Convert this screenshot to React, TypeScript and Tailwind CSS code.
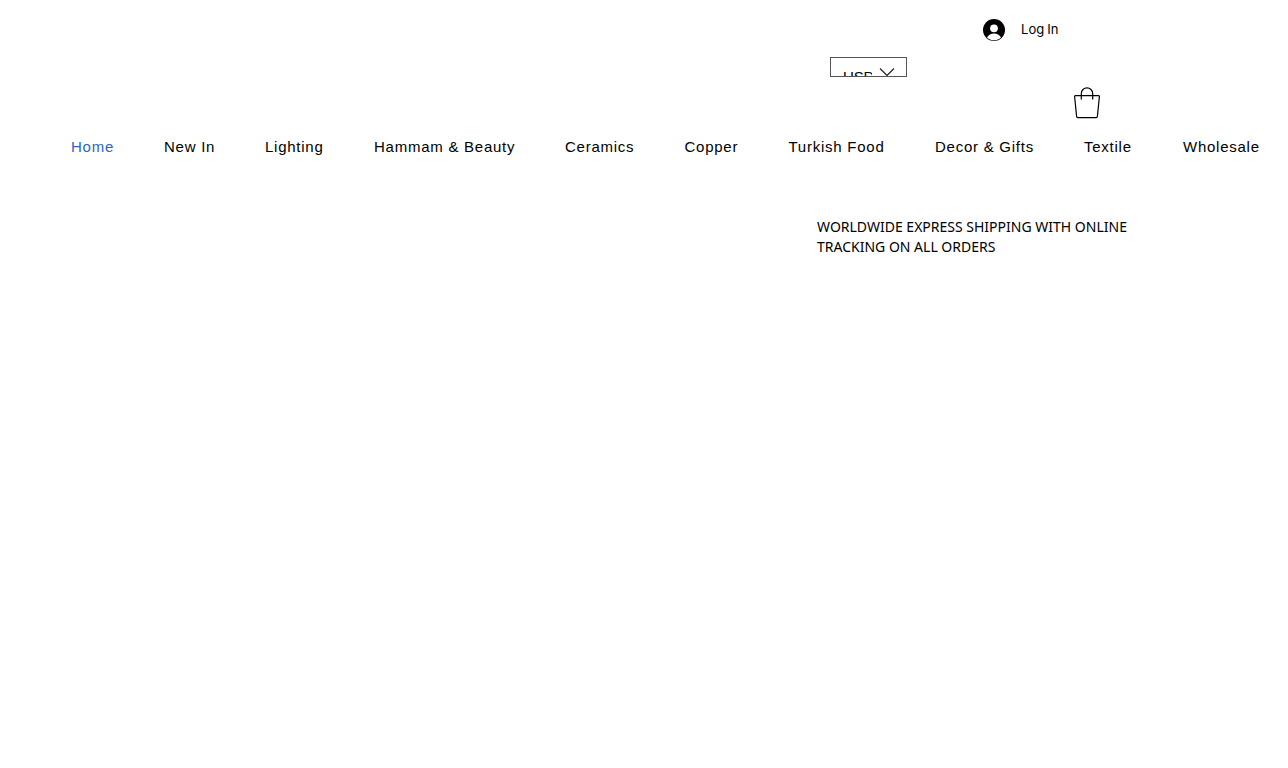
const navItems = [
  { label: 'Home', width: 'w-[93px]', active: true },
  { label: 'New In', width: 'w-[101px]' },
  { label: 'Lighting', width: 'w-[109px]' },
  { label: 'Hammam & Beauty', width: 'w-[191px]' },
  { label: 'Ceramics', width: 'w-[119.5px]' },
  { label: 'Copper', width: 'w-[104px]' },
  { label: 'Turkish Food', width: 'w-[146.5px]' },
  { label: 'Decor & Gifts', width: 'w-[149px]' },
  { label: 'Textile', width: 'w-[99px]' },
  { label: 'Wholesale', width: 'w-[100px]' },
];

function LoginButton() {
  return (
    <button className="ml-[983px] mt-[19px] flex h-[22px] items-center gap-4">
      <svg className="h-[22px] w-[22px] shrink-0" viewBox="0 0 22 22">
        <circle cx="11" cy="11" r="11" fill="#000" />
        <circle cx="11" cy="9.300" r="3.900" fill="#fff" />
        <path d="M4 18.400c1.500-2.500 4-3.800 7-3.800s5.500 1.300 7 3.800c-1.900 1.900-4.300 2.800-7 2.800s-5.100-.9-7-2.800z" fill="#fff" />
      </svg>
      <span className="-mt-[3px] whitespace-nowrap font-[Inter] text-[13px] leading-[18px] tracking-[0.1px] [word-spacing:-1px]">
        Log In
      </span>
    </button>
  );
}

function CurrencySelect() {
  return (
    <button className="ml-[830px] mt-4 flex h-5 w-[77px] items-start overflow-hidden border border-[#555] pl-3">
      <span className="mt-[10px] w-[28.5px] overflow-hidden text-left font-['Liberation_Sans',sans-serif] text-[15px] leading-[18px] tracking-[-0.2px]">
        USD
      </span>
      <svg className="ml-[7.5px] mt-[9px] h-[10px] w-4 shrink-0" viewBox="0 0 16 10" fill="none" stroke="#222" strokeWidth="1.200">
        <path d="M1 1.500l7 7 7-7" />
      </svg>
    </button>
  );
}

function CartButton() {
  return (
    <button className="ml-[1073px] mt-[9px] block">
      <svg className="block h-[33px] w-7" viewBox="0 0 28 33" fill="none" stroke="#000" strokeWidth="1.200">
        <path d="M2.400 9.600h23.200q.9 0 .8.900l-2 19.900q-.1 1.200-1.200 1.200H4.800q-1.100 0-1.200-1.200l-2-19.900q-.1-.9.800-.9z" />
        <path d="M8.300 13.600V7.500a5.700 5.700 0 0 1 11.400 0v6.100" />
      </svg>
    </button>
  );
}

export default function App() {
  return (
    <div className="h-[768px] w-[1288px] overflow-hidden bg-white text-black">
      <header>
        <LoginButton />
        <CurrencySelect />
        <CartButton />
        <nav className="mt-[18px] flex pl-[71px] font-['Liberation_Sans',sans-serif] text-[15px] leading-5 tracking-[0.75px]">
          {navItems.map((item) => (
            <a
              key={item.label}
              href="#"
              className={`shrink-0 whitespace-nowrap ${item.width} ${item.active ? 'text-[#2b66c0]' : ''}`}
            >
              {item.label}
            </a>
          ))}
        </nav>
      </header>
      <main>
        <p className="ml-[817px] mt-[60px] w-[330px] font-['Noto_Sans',sans-serif] text-[14px] leading-5">
          WORLDWIDE EXPRESS SHIPPING WITH ONLINE TRACKING ON ALL ORDERS
        </p>
      </main>
    </div>
  );
}
